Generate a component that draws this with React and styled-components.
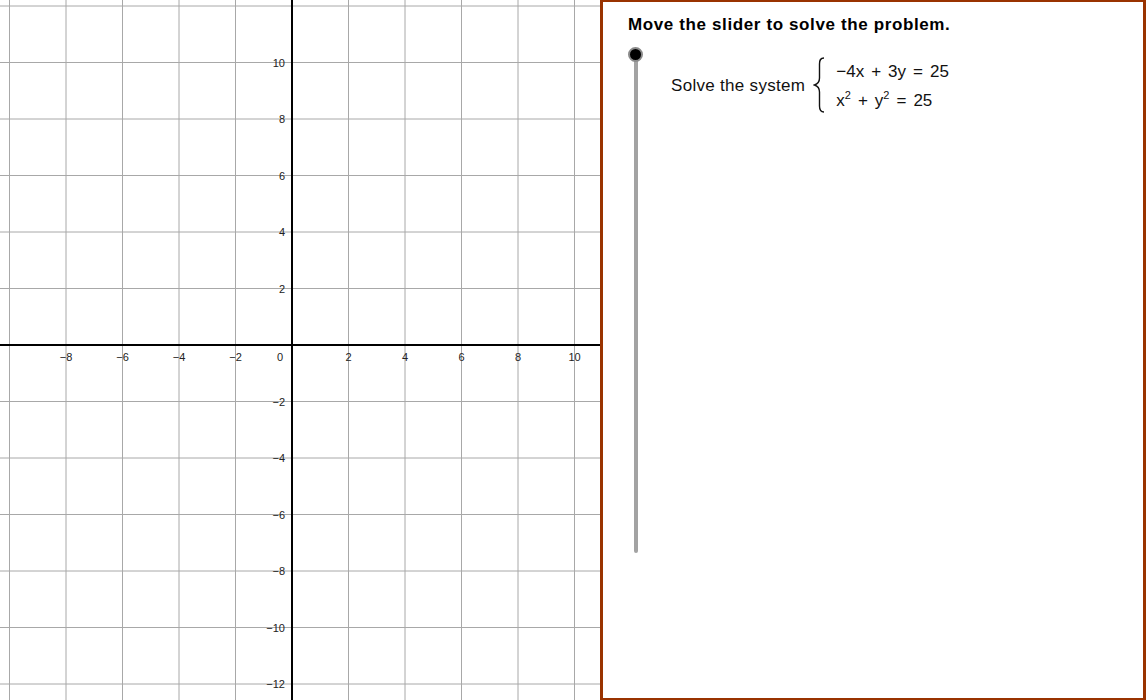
import React from 'react'
import styled, { createGlobalStyle } from 'styled-components'

const GlobalStyle = createGlobalStyle`
  html, body {
    margin: 0;
    padding: 0;
    background: #ffffff;
  }
  body {
    font-family: "Liberation Sans", Arial, sans-serif;
  }
`

const Page = styled.div`
  display: flex;
  flex-direction: row;
  width: 1146px;
  height: 700px;
  overflow: hidden;
`

const GraphPanel = styled.div`
  width: 600px;
  height: 700px;
  flex: none;
`

const SidePanel = styled.div`
  flex: 1;
  height: 700px;
  box-sizing: border-box;
  border-left: 3px solid #993300;
  border-top: 2px solid #993300;
  border-right: 3px solid #993300;
  border-bottom: 2px solid #993300;
  padding: 12px 0 0 25px;
  display: flex;
  flex-direction: column;
`

const Title = styled.div`
  font-weight: bold;
  font-size: 17px;
  color: #000;
  line-height: 22px;
  letter-spacing: 0.62px;
`

const Body = styled.div`
  display: flex;
  flex-direction: row;
  margin-top: 11px;
`

const SliderColumn = styled.div`
  position: relative;
  width: 16px;
  height: 510px;
  display: flex;
  justify-content: center;
  flex: none;
`

const Track = styled.div`
  width: 4px;
  height: 500px;
  margin-top: 6px;
  border-radius: 2px;
  background: #a3a3a3;
`

const Knob = styled.div`
  position: absolute;
  left: 0;
  top: 0;
  width: 11px;
  height: 11px;
  border-radius: 50%;
  background: #000;
  border: 2.5px solid #8a8a8a;
`

const Problem = styled.div`
  display: flex;
  flex-direction: row;
  align-items: center;
  margin-left: 27px;
  margin-top: 8px;
  height: 60px;
`

const Lead = styled.span`
  font-size: 17px;
  color: #111;
  letter-spacing: 0.3px;
  margin-right: 8px;
  margin-top: 2px;
`

const Equations = styled.div`
  display: flex;
  flex-direction: column;
  margin-left: 11px;
  padding-top: 3px;
  font-size: 17px;
  line-height: 29px;
  color: #111;
`

const Line = styled.div`
  white-space: nowrap;
`

const Op = styled.span`
  padding: 0 7px;
`

const Sup = styled.span`
  position: relative;
  top: -7px;
  font-size: 11px;
`

const Brace = () => (
  <svg width="12" height="56" viewBox="0 0 12 56">
    <path
      d="M11 1 C7.5 1 6.5 3 6.5 7 L6.5 21 C6.5 25 4.5 27 1.5 28 C4.5 29 6.5 31 6.5 35 L6.5 49 C6.5 53 7.5 55 11 55"
      fill="none"
      stroke="#111"
      strokeWidth="1.4"
    />
  </svg>
)

const ORIGIN_X = 292
const ORIGIN_Y = 345
const STEP = 56.5

const minus = (v) => (v < 0 ? '\u2212' + Math.abs(v) : String(v))

const Graph = () => {
  const vLines = []
  for (let k = -5; k <= 5; k++) vLines.push(k)
  const hLines = []
  for (let k = -6; k <= 6; k++) hLines.push(k)

  return (
    <svg width="600" height="700" viewBox="0 0 600 700">
      {vLines.map((k) => {
        const x = ORIGIN_X + k * STEP
        return <line key={'v' + k} x1={x} y1="0" x2={x} y2="700" stroke="#a8a8a8" strokeWidth="1" />
      })}
      {hLines.map((k) => {
        const y = ORIGIN_Y + k * STEP
        return <line key={'h' + k} x1="0" y1={y} x2="600" y2={y} stroke="#a8a8a8" strokeWidth="1" />
      })}
      <line x1={ORIGIN_X} y1="0" x2={ORIGIN_X} y2="700" stroke="#000" strokeWidth="2" />
      <line x1="0" y1={ORIGIN_Y} x2="600" y2={ORIGIN_Y} stroke="#000" strokeWidth="2" />
      <g fontFamily="'Liberation Sans', Arial, sans-serif" fontSize="11" fill="#222">
        {vLines.filter((k) => k !== 0 && k !== -5).map((k) => (
          <text key={'xl' + k} x={ORIGIN_X + k * STEP} y={ORIGIN_Y + 16} textAnchor="middle">
            {minus(k * 2)}
          </text>
        ))}
        <text x={ORIGIN_X - 12} y={ORIGIN_Y + 16} textAnchor="middle">0</text>
        {hLines.filter((k) => k !== 0 && k !== -6).map((k) => (
          <text key={'yl' + k} x={ORIGIN_X - 7} y={ORIGIN_Y + k * STEP + 4} textAnchor="end">
            {minus(-k * 2)}
          </text>
        ))}
      </g>
    </svg>
  )
}

export default function App() {
  return (
    <>
      <GlobalStyle />
      <Page>
        <GraphPanel>
          <Graph />
        </GraphPanel>
        <SidePanel>
          <Title>Move the slider to solve the problem.</Title>
          <Body>
            <SliderColumn>
              <Track />
              <Knob />
            </SliderColumn>
            <Problem>
              <Lead>Solve the system</Lead>
              <Brace />
              <Equations>
                <Line>
                  {'\u22124x'}<Op>+</Op>3y<Op>=</Op>25
                </Line>
                <Line>
                  x<Sup>2</Sup><Op>+</Op>y<Sup>2</Sup><Op>=</Op>25
                </Line>
              </Equations>
            </Problem>
          </Body>
        </SidePanel>
      </Page>
    </>
  )
}
